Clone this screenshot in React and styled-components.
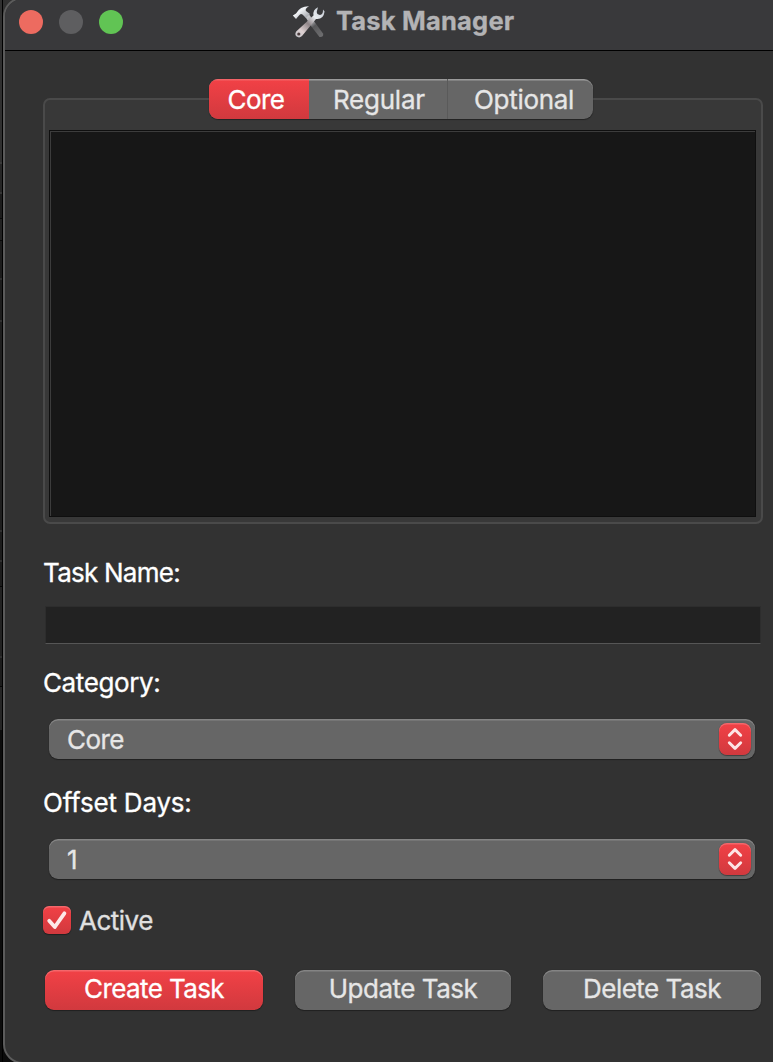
import React from 'react';
import styled, { createGlobalStyle, css } from 'styled-components';

const GlobalStyle = createGlobalStyle`
  * { box-sizing: border-box; }
  body { margin: 0; background: #0d0d0d; overflow: hidden; }
`;

const red = css`background: linear-gradient(#f24146, #d1393e);`;
const raised = css`box-shadow: 0 1px 1px rgba(0, 0, 0, 0.35), 0 0 1px rgba(0, 0, 0, 0.4), inset 0 1.5px 0 rgba(255, 255, 255, 0.2);`;

const Desktop = styled.div`
  width: 773px;
  height: 1062px;
  overflow: hidden;
  padding-left: 3px;
  background: linear-gradient(90deg, transparent 2px, #000 2px, #000 3px, transparent 3px),
    linear-gradient(
      #303030 0 162px, #3a3a3a 162px 164px, #262626 164px 192px, #353535 192px 194px,
      #1c1c1c 194px 218px, #080808 218px 219px, #222 219px 240px, #080808 240px 241px,
      #1c1c1c 241px 278px, #303030 278px 280px, #1c1c1c 280px 320px, #303030 320px 322px,
      #1e1e1e 322px 530px, #303030 530px 532px, #1c1c1c 532px 560px, #303030 560px 562px,
      #1c1c1c 562px 586px, #060606 586px 587px, #222 587px 656px, #303030 656px 658px,
      #1c1c1c 658px 686px, #060606 686px 687px, #252525 687px 730px, #0c0c0c 730px
    );
  font-family: Inter, "Liberation Sans", sans-serif;
  font-size: 26px;
  line-height: 32px;
  color: #fff;
  -webkit-text-stroke: 0.3px currentColor;
`;

const Window = styled.main`
  width: 800px;
  height: 1067px;
  margin-top: -3px;
  border: 2px solid #5b5b5b;
  border-radius: 20px;
  overflow: hidden;
  background: #323232;
`;

const TitleBar = styled.header`
  width: 796px;
  height: 52px;
  padding: 1px 0 0 14px;
  display: flex;
  background: #39393b;
  border-bottom: 1px solid #000;
`;

const Lights = styled.div`
  display: flex;
  gap: 16px;
  padding-top: 10px;
  width: 273px;
`;

const Light = styled.span`
  width: 24px;
  height: 24px;
  border-radius: 50%;
  background: ${p => p.$color};
`;

const Title = styled.h1`
  margin: 0;
  padding-top: 5px;
  display: flex;
  gap: 10px;
  font-size: 25.5px;
  line-height: 32px;
  font-weight: 700;
  color: #b3b3b5;
  letter-spacing: 0.2px;
  white-space: nowrap;
`;

const Content = styled.div`
  width: 768px;
  padding: 28px 10px 0 38px;
  display: flex;
  flex-direction: column;
`;

const Tabs = styled.nav`
  display: flex;
  align-self: flex-start;
  position: relative;
  z-index: 1;
  width: 384px;
  height: 40px;
  margin: 0 0 -21px 166px;
  border-radius: 9px;
  background: #666;
  overflow: hidden;
  ${raised}
`;

const Tab = styled.button`
  width: ${p => p.$width}px;
  height: 40px;
  border: 0;
  border-left: ${p => (p.$divided ? '1px solid #5a5a5a' : '0')};
  padding: 2px 0 0 ${p => p.$indent}px;
  text-align: left;
  white-space: nowrap;
  background: transparent;
  font: inherit;
  letter-spacing: ${p => p.$track}px;
  color: #e6e6e6;
  box-shadow: inset 0 1.5px 0 rgba(255, 255, 255, 0.18);
  ${p => p.$active && css`${red} color: #fff;`}
`;

const Panel = styled.section`
  width: 720px;
  height: 426px;
  padding: 30px 4px 4px;
  border: 2px solid #4a4a4a;
  border-radius: 7px;
  background: #383838;
`;

const TaskList = styled.div`
  height: 387px;
  width: 707px;
  border: 1px solid #0f0f0f;
  background: #171717;
  box-shadow: inset 1px 1px 0 #3c3c3c;
`;

const Label = styled.label`
  height: 32px;
  margin-top: ${p => p.$top}px;
  letter-spacing: ${p => p.$track}px;
  white-space: nowrap;
`;

const Input = styled.input`
  width: 716px;
  height: 38px;
  margin: 17px 0 0 2px;
  border: 1px solid #2d2d2d;
  border-bottom-color: #565656;
  background: #222;
  outline: 0;
`;

const Select = styled.div`
  display: flex;
  align-items: center;
  justify-content: space-between;
  width: 706px;
  height: 40px;
  margin: 20px 0 0 6px;
  padding: 0 4px 0 18px;
  border-radius: 9px;
  background: #666;
  color: #e6e6e6;
  letter-spacing: ${p => p.$track}px;
  ${raised}
`;

const Value = styled.span`
  padding-top: 2px;
`;

const Stepper = styled.span`
  display: flex;
  width: 32px;
  height: 32px;
  border-radius: 8px;
  ${red}
  ${raised}
`;

const CheckRow = styled.label`
  display: flex;
  align-items: center;
  gap: 8px;
  height: 28px;
  margin-top: 27px;
  color: #e0e0e0;
  letter-spacing: ${p => p.$track}px;
`;

const CheckText = styled.span`
  padding-top: 2px;
`;

const CheckBox = styled.span`
  display: flex;
  width: 28px;
  height: 28px;
  border-radius: 6px;
  ${red}
  ${raised}
`;

const Actions = styled.div`
  display: flex;
  margin: 36px 0 0 2px;
  gap: 32px;
`;

const Button = styled.button`
  flex: none;
  width: ${p => p.$width}px;
  height: 40px;
  border: 0;
  padding: 0 0 2px;
  border-radius: 9px;
  background: #666;
  color: #e6e6e6;
  font: inherit;
  letter-spacing: ${p => p.$track}px;
  ${raised}
  ${p => p.$primary && css`${red} color: #fff;`}
`;

const Tools = () => (
  <svg width="34" height="34" viewBox="0 0 34 34" fill="none">
    <defs>
      <linearGradient id="steel" x1="0" y1="0" x2="1" y2="1">
        <stop offset="0" stopColor="#b9c4d2" />
        <stop offset=".4" stopColor="#f1f3f6" />
        <stop offset="1" stopColor="#8d8f96" />
      </linearGradient>
      <linearGradient id="wrench" x1="30" y1="3" x2="4" y2="31" gradientUnits="userSpaceOnUse">
        <stop offset="0" stopColor="#c3c9d2" />
        <stop offset=".3" stopColor="#e9ecf0" />
        <stop offset=".55" stopColor="#8f8588" />
        <stop offset=".8" stopColor="#ddd0d1" />
        <stop offset="1" stopColor="#c4c4c9" />
      </linearGradient>
      <linearGradient id="grip" x1="14" y1="10" x2="31" y2="32" gradientUnits="userSpaceOnUse">
        <stop offset="0" stopColor="#d6d7da" />
        <stop offset=".35" stopColor="#9a9a9e" />
        <stop offset=".5" stopColor="#58585a" />
        <stop offset="1" stopColor="#707072" />
      </linearGradient>
    </defs>
    <path d="M12.5 10.5 L16 8 L31.2 28.8 Q31.5 32.5 27.5 32 L19 21 Z" fill="url(#grip)" />
    <path d="M0.8 10.5 L4 8.5 Q8 1 17 1.2 Q12.5 4 14 6 L18 9 L14 13 L10.5 9.5 Q8.5 8 7 10.5 L4 14 Z" fill="url(#steel)" />
    <path d="M26 2.2 Q20.5 4.5 21.5 10.5 L4.2 26.5 Q2.3 29.5 4.6 31.6 Q7.5 33.5 10 31 L24 14 Q31.5 14.8 32.6 6.5 L31 4.5 Q31.2 9.5 28 10 Q24.5 9.5 24.8 6.5 Z" fill="url(#wrench)" />
    <circle cx="6.8" cy="29" r="1.6" fill="#4b3b3c" />
  </svg>
);

const Chevrons = () => (
  <svg width="32" height="32" viewBox="0 0 32 32" fill="none" stroke="#fde5e5" strokeWidth="2.9" strokeLinecap="round" strokeLinejoin="round">
    <path d="M10.3 12.2 L16 6.6 L21.7 12.2 M10.3 19.8 L16 25.4 L21.7 19.8" />
  </svg>
);

const Check = () => (
  <svg width="28" height="28" viewBox="0 0 28 28" fill="none" stroke="#fde8e8" strokeWidth="3.8" strokeLinecap="round" strokeLinejoin="round">
    <path d="M6.2 14.8 L11.8 21 L21.4 7.3" />
  </svg>
);

export default function App() {
  return (
    <Desktop>
      <GlobalStyle />
      <Window>
        <TitleBar>
          <Lights>
            <Light $color="#ed6b60" />
            <Light $color="#5e5e60" />
            <Light $color="#61c454" />
          </Lights>
          <Title><Tools /><span>Task Manager</span></Title>
        </TitleBar>
        <Content>
          <Tabs>
            <Tab $width={100} $indent={18.5} $active $track={-0.6}>Core</Tab>
            <Tab $width={138} $indent={24} $track={-0.25}>Regular</Tab>
            <Tab $width={146} $indent={26} $divided $track={-0.3}>Optional</Tab>
          </Tabs>
          <Panel><TaskList /></Panel>
          <Label $top={33} $track={-0.75}>Task Name:</Label>
          <Input />
          <Label $top={23} $track={-0.4}>Category:</Label>
          <Select $track={-0.6}><Value>Core</Value><Stepper><Chevrons /></Stepper></Select>
          <Label $top={28} $track={-0.2}>Offset Days:</Label>
          <Select $track={0}><Value>1</Value><Stepper><Chevrons /></Stepper></Select>
          <CheckRow $track={-0.5}><CheckBox><Check /></CheckBox><CheckText>Active</CheckText></CheckRow>
          <Actions>
            <Button $width={218} $primary $track={-0.6}>Create Task</Button>
            <Button $width={216} $track={-0.5}>Update Task</Button>
            <Button $width={218} $track={-0.5}>Delete Task</Button>
          </Actions>
        </Content>
      </Window>
    </Desktop>
  );
}
